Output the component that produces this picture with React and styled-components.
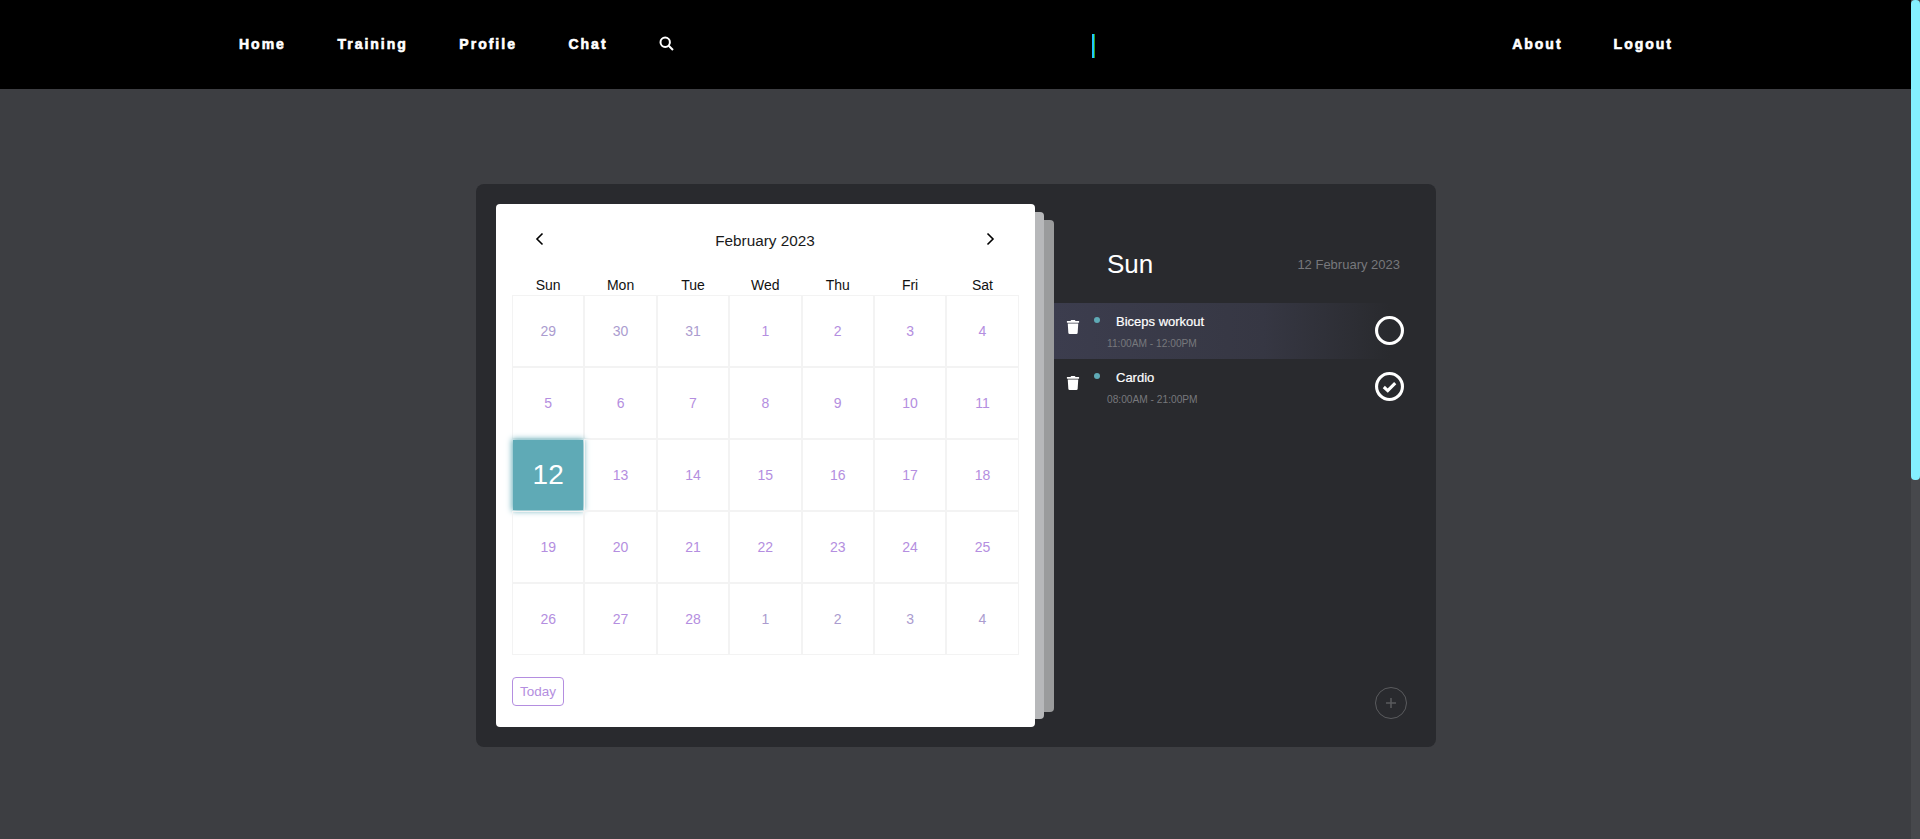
import React from 'react';
import styled, { createGlobalStyle } from 'styled-components';
import { FaTrash } from 'react-icons/fa';

const GlobalStyle = createGlobalStyle`
  html, body {
    margin: 0;
    height: 100%;
    overflow: hidden;
    background: #3d3e42;
    font-family: "Liberation Sans", Arial, sans-serif;
  }
`;

const weekdays = ['Sun', 'Mon', 'Tue', 'Wed', 'Thu', 'Fri', 'Sat'];

const days = [
  [29, 'muted'], [30, 'muted'], [31, 'muted'], [1], [2], [3], [4],
  [5], [6], [7], [8], [9], [10], [11],
  [12, 'selected'], [13], [14], [15], [16], [17], [18],
  [19], [20], [21], [22], [23], [24], [25],
  [26], [27], [28], [1, 'muted'], [2, 'muted'], [3, 'muted'], [4, 'muted'],
];

const events = [
  { title: 'Biceps workout', time: '11:00AM - 12:00PM', done: false, active: true },
  { title: 'Cardio', time: '08:00AM - 21:00PM', done: true },
];

const App = () => {
  return (
    <>
      <GlobalStyle />
      <Nav>
        <NavLink>Home</NavLink>
        <NavLink>Training</NavLink>
        <NavLink>Profile</NavLink>
        <NavLink>Chat</NavLink>
        <SearchIcon viewBox="0 0 15 15">
          <circle cx="6.2" cy="6.2" r="4.7" />
          <path d="M9.7 9.7 14 14" />
        </SearchIcon>
        <Caret />
        <NavRight>
          <NavLink>About</NavLink>
          <NavLink>Logout</NavLink>
        </NavRight>
      </Nav>

      <Main>
        <Card>
          <CalendarStack>
            <Calendar>
              <CalendarHeader>
                <Arrow viewBox="0 0 16 16"><path d="M10.5 2.5 5 8l5.5 5.5" /></Arrow>
                <MonthTitle>February 2023</MonthTitle>
                <Arrow viewBox="0 0 16 16"><path d="M5.5 2.5 11 8l-5.5 5.5" /></Arrow>
              </CalendarHeader>
              <Weekdays>
                {weekdays.map((d) => <Weekday key={d}>{d}</Weekday>)}
              </Weekdays>
              <Days>
                {days.map(([n, kind], i) => <Day key={i} $kind={kind}>{n}</Day>)}
              </Days>
              <TodayButton>Today</TodayButton>
            </Calendar>
          </CalendarStack>

          <Agenda>
            <AgendaHeader>
              <DayName>Sun</DayName>
              <FullDate>12 February 2023</FullDate>
            </AgendaHeader>
            <EventList>
              {events.map((ev) => (
                <EventRow key={ev.title} $active={ev.active}>
                  <TrashButton><FaTrash size={14} /></TrashButton>
                  <Dot />
                  <EventText>
                    <EventTitle>{ev.title}</EventTitle>
                    <EventTime>{ev.time}</EventTime>
                  </EventText>
                  <Status viewBox="0 0 28 28">
                    <circle cx="14" cy="14" r="12.5" />
                    {ev.done && <path d="M8.5 14.5l3.8 3.4 7.2-7.2" />}
                  </Status>
                </EventRow>
              ))}
            </EventList>
            <AddButton>
              <svg viewBox="0 0 12 12" width="12" height="12"><path d="M6 1v10M1 6h10" /></svg>
            </AddButton>
          </Agenda>
        </Card>
      </Main>
      <ScrollTrack />
      <ScrollThumb />
    </>
  );
};

const Nav = styled.nav`
  height: 89px;
  box-sizing: border-box;
  background: #000;
  display: flex;
  align-items: center;
  gap: 51.5px;
  padding: 0 247px 2px 239px;
`;

const NavLink = styled.a`
  color: #fff;
  font-size: 14px;
  font-weight: 700;
  letter-spacing: 2px;
  -webkit-text-stroke: 0.6px #fff;
`;

const SearchIcon = styled.svg`
  width: 15px;
  height: 15px;
  fill: none;
  stroke: #fff;
  stroke-width: 2;
`;

const Caret = styled.span`
  width: 3px;
  height: 24px;
  background: linear-gradient(90deg, #20c8ff 66%, #2fa01a 66%);
  margin: 5px 0 0 366.5px;
`;

const NavRight = styled.div`
  margin-left: auto;
  display: flex;
  gap: 51px;
`;

const Main = styled.main`
  display: flex;
  justify-content: center;
  padding-top: 95px;
`;

const Card = styled.section`
  width: 960px;
  height: 563px;
  box-sizing: border-box;
  margin-left: -8px;
  padding: 20px 0 20px 20px;
  background: #292a2e;
  border-radius: 8px;
  display: flex;
`;

const CalendarStack = styled.div`
  position: relative;
  width: 539px;
  flex: none;

  &::before,
  &::after {
    content: '';
    position: absolute;
    border-radius: 0 4px 4px 0;
  }
  &::before {
    top: 8px;
    bottom: 8px;
    left: 100%;
    width: 9px;
    background: #b7b8ba;
    z-index: 1;
  }
  &::after {
    top: 16px;
    bottom: 15px;
    left: 100%;
    width: 19px;
    background: #9a9b9c;
  }
`;

const Calendar = styled.div`
  position: relative;
  z-index: 2;
  height: 100%;
  box-sizing: border-box;
  padding: 0 16px;
  background: #fff;
  border-radius: 4px;
`;

const CalendarHeader = styled.header`
  display: flex;
  align-items: center;
  justify-content: space-between;
  height: 73px;
  padding: 0 21px 0 20px;
`;

const Arrow = styled.svg`
  width: 16px;
  height: 16px;
  fill: none;
  stroke: #000;
  stroke-width: 1.6;
  margin-top: -4px;
`;

const MonthTitle = styled.span`
  font-size: 15.3px;
  color: #1a1a1a;
`;

const Weekdays = styled.div`
  display: grid;
  grid-template-columns: repeat(7, 72.38px);
  height: 18px;
`;

const Weekday = styled.span`
  font-size: 14px;
  color: #111;
  text-align: center;
  line-height: 16px;
`;

const Days = styled.div`
  display: grid;
  grid-template-columns: repeat(7, 72.38px);
  grid-auto-rows: 72px;
`;

const dayColor = { muted: '#ab9ccf', selected: '#fff' };

const Day = styled.div`
  box-sizing: border-box;
  display: flex;
  align-items: center;
  justify-content: center;
  border: 1px solid #f3f3f3;
  font-size: ${(p) => (p.$kind === 'selected' ? '28px' : '14px')};
  color: ${(p) => dayColor[p.$kind] || '#b48ee0'};
  ${(p) => p.$kind === 'selected' && `
    margin: 1px;
    border: 0;
    background: #5faab6;
    box-shadow: 0 0 6px 1px #5faab6;
  `}
`;

const TodayButton = styled.button`
  margin-top: 22px;
  width: 52px;
  height: 29px;
  padding: 0;
  background: #fff;
  border: 1px solid #b48ee0;
  border-radius: 4px;
  color: #b48ee0;
  font: 13.5px "Liberation Sans", Arial, sans-serif;
`;

const Agenda = styled.div`
  position: relative;
  z-index: 3;
  flex: 1;
  min-width: 0;
  margin-left: 19px;
  display: flex;
  flex-direction: column;
`;

const AgendaHeader = styled.header`
  display: flex;
  align-items: center;
  justify-content: space-between;
  height: 99px;
  box-sizing: border-box;
  padding: 21px 36px 0 53px;
`;

const DayName = styled.h2`
  margin: 0;
  font-size: 26px;
  font-weight: 400;
  color: #fff;
`;

const FullDate = styled.span`
  font-size: 13px;
  color: #77787c;
`;

const EventList = styled.ul`
  margin: 0;
  padding: 0;
  list-style: none;
`;

const EventRow = styled.li`
  height: 56px;
  display: flex;
  align-items: flex-start;
  padding: 0 32px 0 12px;
  background: ${(p) => (p.$active ? 'linear-gradient(90deg, #3c3d4e 0%, #363743 55%, #292a2e 88%)' : 'transparent')};
`;

const TrashButton = styled.span`
  color: #fff;
  display: flex;
  margin-top: 17px;
`;

const Dot = styled.span`
  width: 6px;
  height: 6px;
  border-radius: 50%;
  background: #5faab6;
  margin: 14px 0 0 14px;
`;

const EventText = styled.div`
  flex: 1;
  padding: 11px 0 0 7px;
`;

const EventTitle = styled.div`
  font-size: 13px;
  color: #fff;
  line-height: 16px;
  margin-left: 9px;
  -webkit-text-stroke: 0.2px #fff;
`;

const EventTime = styled.div`
  font-size: 10.2px;
  color: #77787c;
  line-height: 13px;
  margin-top: 7px;
`;

const Status = styled.svg`
  width: 29px;
  height: 29px;
  margin-top: 13px;
  fill: none;
  stroke: #fff;
  stroke-width: 3;
`;

const AddButton = styled.button`
  position: absolute;
  right: 29px;
  bottom: 8px;
  width: 32px;
  height: 32px;
  padding: 0;
  display: flex;
  align-items: center;
  justify-content: center;
  background: transparent;
  border: 1px solid #5a5b5e;
  border-radius: 50%;

  svg {
    fill: none;
    stroke: #5a5b5e;
    stroke-width: 1.5;
  }
`;

const ScrollTrack = styled.div`
  position: fixed;
  top: 0;
  bottom: 0;
  right: 0;
  width: 9px;
  background: #47484c;
`;

const ScrollThumb = styled.div`
  position: fixed;
  top: 0;
  right: 0;
  width: 9px;
  height: 480px;
  background: #84f0ff;
  border-radius: 4px;
`;

export default App;
